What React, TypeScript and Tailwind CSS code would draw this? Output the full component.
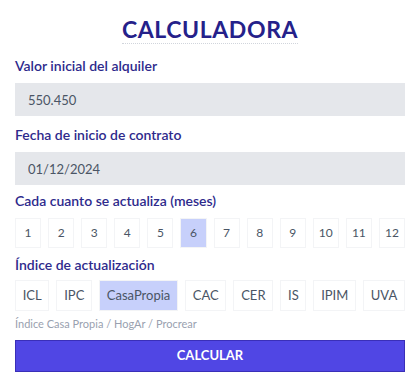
import { useState } from "react";

const months = [1, 2, 3, 4, 5, 6, 7, 8, 9, 10, 11, 12];
const indices = ["ICL", "IPC", "CasaPropia", "CAC", "CER", "IS", "IPIM", "UVA"];

export default function App() {
  const [month, setMonth] = useState(6);
  const [index, setIndex] = useState("CasaPropia");

  return (
    <div className="min-h-[386px] w-full bg-white px-[15px] pt-[16px] font-['Lato',sans-serif]">
      {/* Title */}
      <div className="flex justify-center">
        <h1 className="border-b border-dotted border-gray-300 text-[23px] font-bold leading-[27px] tracking-[0.6px] text-[#25218a]">
          CALCULADORA
        </h1>
      </div>

      <label className="mt-[12px] block text-[14px] font-semibold leading-[20px] text-[#2e2a8c]">
        Valor inicial del alquiler
      </label>
      <input
        className="mt-[7px] block h-[33px] w-full bg-gray-200 px-[13px] text-[13px] text-gray-600 outline-none"
        defaultValue="550.450"
      />

      <label className="mt-[9px] block text-[14px] font-semibold leading-[20px] text-[#2e2a8c]">
        Fecha de inicio de contrato
      </label>
      <input
        className="mt-[7px] block h-[33px] w-full bg-gray-200 px-[13px] text-[13px] text-gray-600 outline-none"
        defaultValue="01/12/2024"
      />

      <label className="mt-[6px] block text-[14px] font-semibold leading-[20px] text-[#2e2a8c]">
        Cada cuanto se actualiza (meses)
      </label>
      <div className="mt-[7px] grid grid-cols-12 gap-[7px]">
        {months.map((m) => (
          <button
            key={m}
            onClick={() => setMonth(m)}
            className={`h-[30px] border border-gray-100 text-[12px] text-gray-600 ${
              month === m ? "border-[#c7d0fb] bg-[#c7d0fb]" : "bg-white"
            }`}
          >
            {m}
          </button>
        ))}
      </div>

      <label className="mt-[7px] block text-[14px] font-semibold leading-[20px] text-[#2e2a8c]">
        Índice de actualización
      </label>
      <div className="mt-[5px] flex gap-[7px]">
        {indices.map((i) => (
          <button
            key={i}
            onClick={() => setIndex(i)}
            className={`h-[31px] flex-auto border border-gray-100 px-[6px] text-[13px] text-gray-600 ${
              index === i ? "border-[#c7d0fb] bg-[#c7d0fb]" : "bg-white"
            }`}
          >
            {i}
          </button>
        ))}
      </div>
      <p className="mt-[5px] text-[11px] leading-[16px] text-gray-400">
        Índice Casa Propia / HogAr / Procrear
      </p>

      <button className="mt-[8px] h-[32px] w-full border border-[#3a2fb8] bg-[#5046e4] text-[13px] font-bold text-white">
        CALCULAR
      </button>
    </div>
  );
}
